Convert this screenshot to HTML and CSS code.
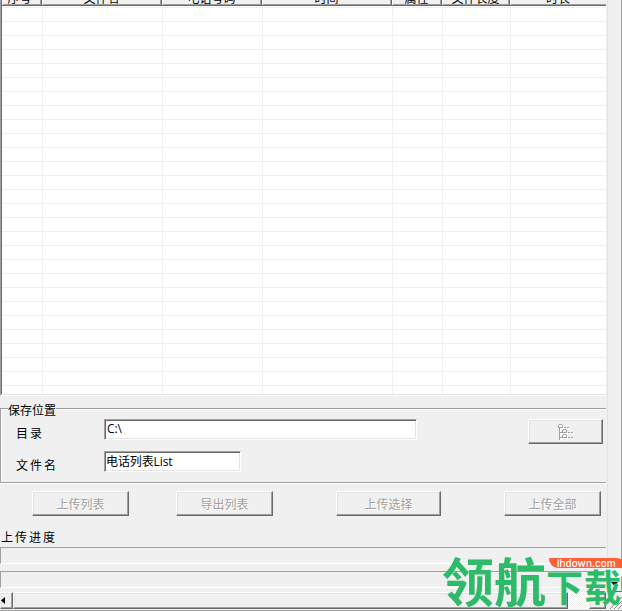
FILE: index.html
```html
<!DOCTYPE html>
<html lang="zh-CN">
<head>
<meta charset="utf-8">
<title>上传</title>
<link rel="stylesheet" href="styles.css">
</head>
<body>
<div class="window">
  <div class="view">
    <main class="content">
      <section class="list">
        <div class="list-head columns">
          <div>序号</div><div>文件名</div><div>电话号码</div><div>时间</div><div>属性</div><div>文件长度</div><div>时长</div>
        </div>
        <div class="list-body columns">
          <i></i><i></i><i></i><i></i><i></i><i></i><i></i>
        </div>
      </section>
      <section class="group">
        <h2>保存位置</h2>
        <div class="row">
          <label>目录</label>
          <div class="field wide">C:\</div>
          <button class="browse" disabled aria-label="浏览">
            <svg width="17" height="17" viewBox="0 0 17 17" shape-rendering="crispEdges">
              <defs><path id="tree" d="M1 4h1v12h-1zM2 8h2v1h-2zM2 13h2v1h-2zM1 0h3v1h-3zM0 1h1v2h-1zM4 1h1v2h-1zM0 3h5v1h-5zM5 5h3v1h-3zM4 6h1v2h-1zM8 6h1v2h-1zM4 8h5v1h-5zM5 10h3v1h-3zM4 11h1v2h-1zM8 11h1v2h-1zM4 13h5v1h-5zM6 3h2v1h-2zM9 3h2v1h-2zM10 8h2v1h-2zM13 8h2v1h-2zM10 13h2v1h-2zM13 13h2v1h-2z"/></defs>
              <use href="#tree" x="1" y="1" fill="#fff"/>
              <use href="#tree" fill="#a0a0a0"/>
            </svg>
          </button>
        </div>
        <div class="row">
          <label>文件名</label>
          <div class="field">电话列表List</div>
        </div>
      </section>
      <div class="actions">
        <button disabled>上传列表</button>
        <button disabled>导出列表</button>
        <button class="select" disabled>上传选择</button>
        <button disabled>上传全部</button>
      </div>
      <div class="caption">上传进度</div>
      <div class="progress"></div>
      <div class="progress"></div>
    </main>
    <aside class="vscroll">
      <div class="vthumb"></div>
      <div class="vtrack"></div>
      <div class="varrow"><svg width="7" height="4"><path d="M0 0H7L3.500 4Z"/></svg></div>
    </aside>
  </div>
  <footer class="hscroll">
    <div class="arrow left"><svg width="4" height="7"><path d="M4 0V7L0 3.500Z"/></svg></div>
    <div class="hthumb"></div>
    <div class="track"></div>
    <div class="arrow right"><svg width="4" height="7"><path d="M0 0V7L4 3.500Z"/></svg></div>
    <div class="grip"><svg width="12" height="12" stroke="#909090"><path d="M0 12L12 0M4 12L12 4M8 12L12 8"/></svg></div>
  </footer>
  <div class="edge"></div>
  <div class="brand">
    <span class="brand-large">领航</span><span class="brand-small">下载</span>
    <span class="brand-url">lhdown.com</span>
  </div>
</div>
</body>
</html>
```
FILE: styles.css
```css
* { box-sizing: border-box; }
body { margin: 0; }
.window {
  position: relative;
  display: flex;
  flex-direction: column;
  width: 622px;
  height: 611px;
  overflow: hidden;
  background: #f0f0f0;
  color: #000;
  font: 12px/14px "Liberation Sans", "Noto Sans CJK SC", sans-serif;
}
.view { display: flex; height: 592px; }
.content { width: 606px; flex: none; }
.list {
  height: 396px;
  border-left: 1px solid #a0a0a0;
  border-bottom: 1px solid #fff;
  box-shadow: inset 0 -1px #e3e3e3;
}
.columns { display: grid; grid-template-columns: 40px 120px 100px 130px 50px 68px 96px; }
.list-head {
  height: 6px;
  overflow: hidden;
  border-left: 1px solid #696969;
  border-bottom: 1px solid #696969;
}
.list-head div {
  height: 13px;
  margin-top: -8px;
  line-height: 14px;
  text-align: center;
  text-indent: -1px;
  border-left: 1px solid #fff;
  border-right: 1px solid #696969;
  box-shadow: inset -1px -1px #a0a0a0;
}
.list-head div:first-child { padding-right: 4px; }
.list-head div:last-child { border-right: 0; box-shadow: inset 0 -1px #a0a0a0; }
.list-body {
  height: 388px;
  border-left: 1px solid #696969;
  background: repeating-linear-gradient(#fff 0 1px, #f0f0f0 1px 2px, #fff 2px 14px);
  grid-template-columns: 41px 120px 100px 130px 50px 68px 95px;
}
.list-body i { border-right: 1px solid #f0f0f0; }
.list-body i:last-child { border: 0; }
.group {
  height: 75px;
  margin-top: 12px;
  border: 1px solid #a0a0a0;
  border-right: 0;
  box-shadow: inset 1px 1px #fff, 0 1px #fff;
  padding-top: 10px;
}
.group h2 {
  width: 48px;
  height: 14px;
  margin: -15px 0 1px 7px;
  font: inherit;
  background: #f0f0f0;
  white-space: nowrap;
}
.row { display: flex; height: 32px; align-items: flex-start; }
.row label { width: 103px; padding: 8px 0 0 15px; letter-spacing: 2px; }
.field {
  width: 137px;
  height: 21px;
  padding: 2px 1px 0;
  border: 1px solid;
  border-color: #a0a0a0 #fff #fff #a0a0a0;
  box-shadow: inset 1px 1px #696969, inset -1px -1px #e3e3e3;
  background: #fff;
  line-height: 16px;
  font-family: "Open Sans", "Noto Sans CJK SC", sans-serif;
  letter-spacing: -.1px;
  white-space: nowrap;
}
.field.wide { width: 313px; padding: 1px 2px; }
button {
  display: flex;
  align-items: center;
  justify-content: center;
  width: 97px;
  height: 26px;
  padding: 0;
  font: inherit;
  color: #a0a0a0;
  background: #f0f0f0;
  border: 1px solid;
  border-color: #fff #696969 #696969 #fff;
  box-shadow: inset -1px -1px #a0a0a0, inset 1px 1px #e3e3e3;
  text-shadow: 1px 1px #fff;
}
.browse { width: 75px; height: 25px; margin-left: 111px; padding: 2px 0 0 1px; }
.actions { display: flex; height: 39px; padding: 8px 0 0 32px; }
.actions button { margin-right: 47px; height: 25px; padding-top: 2px; }
.actions button:nth-child(2) { margin-right: 63px; }
.actions .select { width: 105px; margin-right: 63px; }
.actions button:last-child { margin-right: 0; }
.caption { height: 25px; padding: 9px 0 0 1px; letter-spacing: 2px; }
.progress {
  height: 17px;
  margin-bottom: 7px;
  border: 1px solid;
  border-color: #a0a0a0 transparent #fff #a0a0a0;
  border-right: 0;
}
.vscroll { width: 16px; padding-left: 1px; }
.vthumb { height: 564px; border: solid; border-width: 0 1px 1px; border-color: #e3e3e3 #a0a0a0 #696969 #e3e3e3; box-shadow: inset 1px 0 #f0f0f0; }
.vtrack { height: 12px; background: repeating-conic-gradient(#fff 0 25%, #f0f0f0 0 50%) 0 0 / 2px 2px; }
.varrow { height: 16px; display: flex; align-items: center; justify-content: center; border: 1px solid; border-color: #fff #a0a0a0 #696969 #fff; }
.hscroll { display: flex; height: 17px; }
.arrow, .hthumb {
  border: 1px solid;
  border-color: #fff #696969 #696969 #f0f0f0;
  box-shadow: inset -1px -1px #a0a0a0, inset 1px 1px #e3e3e3;
}
.arrow { width: 13px; display: flex; align-items: center; }
.arrow.right { width: 17px; justify-content: center; }
.hthumb { width: 555px; border-left-color: #fff; }
.track { width: 21px; background: repeating-conic-gradient(#fff 0 25%, #f0f0f0 0 50%) 0 0 / 2px 2px; }
.grip { width: 16px; padding: 5px 0 0 4px; }
.grip svg { display: block; }
.edge { height: 2px; border-top: 1px solid #f0f0f0; background: #a0a0a0; }
.brand {
  position: absolute;
  left: 442px;
  top: 554px;
  display: flex;
  width: 180px;
  height: 57px;
  overflow: hidden;
  color: #2dba69;
  font-family: "Noto Sans CJK SC", sans-serif;
  font-weight: 700;
  white-space: nowrap;
}
.brand-large { width: 106px; font-size: 52px; line-height: 51px; }
.brand-small { margin-top: 16px; font-size: 37px; line-height: 32px; letter-spacing: 1px; }
.brand-url {
  position: absolute;
  left: 107px;
  top: 4px;
  width: 76px;
  height: 10px;
  padding-left: 8px;
  border-radius: 1px 9px 0 10px;
  background: #ff6038;
  color: #fff;
  font: 500 10px/10px Inter, sans-serif;
}
```
